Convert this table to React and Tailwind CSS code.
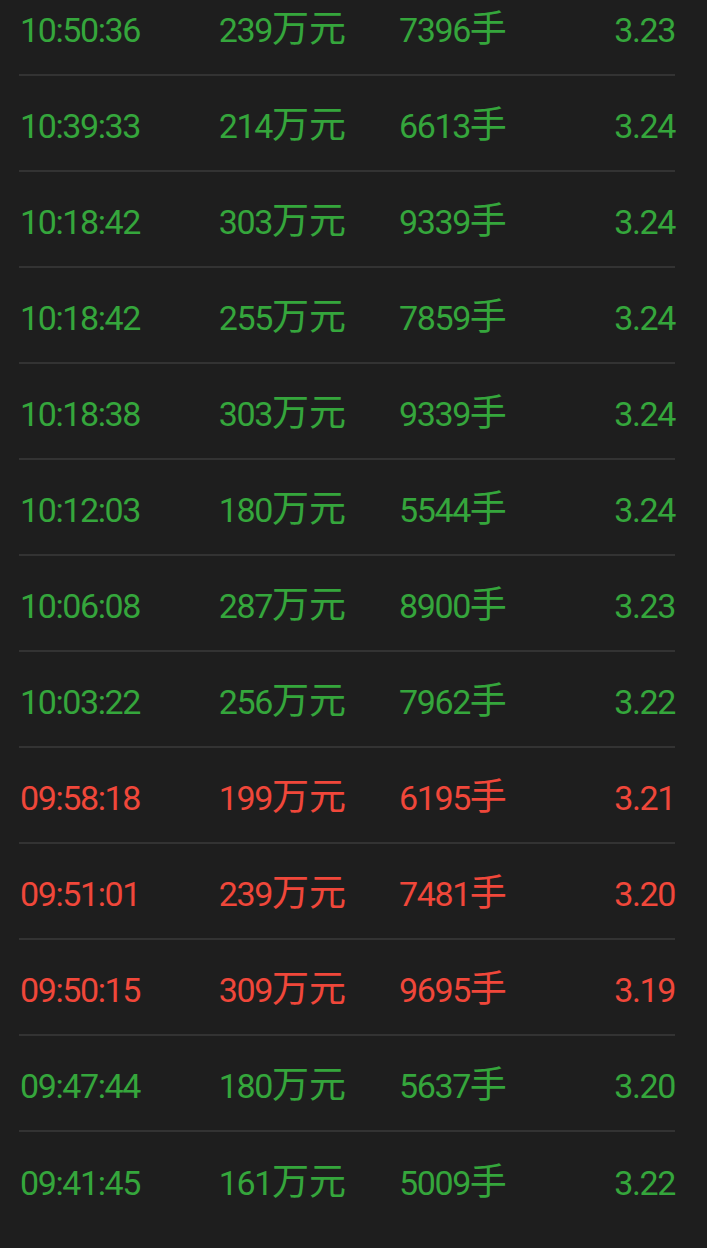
const rows = [
  ["10:50:36", "239", "7396", "3.23", "g"],
  ["10:39:33", "214", "6613", "3.24", "g"],
  ["10:18:42", "303", "9339", "3.24", "g"],
  ["10:18:42", "255", "7859", "3.24", "g"],
  ["10:18:38", "303", "9339", "3.24", "g"],
  ["10:12:03", "180", "5544", "3.24", "g"],
  ["10:06:08", "287", "8900", "3.23", "g"],
  ["10:03:22", "256", "7962", "3.22", "g"],
  ["09:58:18", "199", "6195", "3.21", "r"],
  ["09:51:01", "239", "7481", "3.20", "r"],
  ["09:50:15", "309", "9695", "3.19", "r"],
  ["09:47:44", "180", "5637", "3.20", "g"],
  ["09:41:45", "161", "5009", "3.22", "g"],
];

const cjk = { fontFamily: '"Noto Sans CJK SC", sans-serif' };

export default function App() {
  return (
    <div className="w-[707px] h-[1248px] overflow-hidden bg-[#1e1e1e]">
      <div
        className="ml-[19px] mr-[32px] -mt-[20px]"
        style={{ fontFamily: 'Roboto, "Noto Sans CJK SC", sans-serif' }}
      >
        {rows.map((r, i) => (
          <div
            key={i}
            className={
              "flex items-center h-[96px] pt-[6px] text-[34px] leading-[40px] tracking-[-1.4px] " +
              (i < rows.length - 1 ? "border-b-2 border-[#333333] " : "") +
              (r[4] === "g" ? "text-[#35a63c]" : "text-[#f0473a]")
            }
          >
            <div className="w-[327px] flex justify-between items-center">
              <span className="pl-[1px]">{r[0]}</span>
              <span>
                {r[1]}
                <span className="tracking-normal text-[37px] leading-[0px]" style={cjk}>
                  万元
                </span>
              </span>
            </div>
            <div className="ml-[53px] flex-1">
              {r[2]}
              <span className="tracking-normal text-[37px] leading-[0px]" style={cjk}>
                手
              </span>
            </div>
            <div className="text-right">{r[3]}</div>
          </div>
        ))}
      </div>
    </div>
  );
}
